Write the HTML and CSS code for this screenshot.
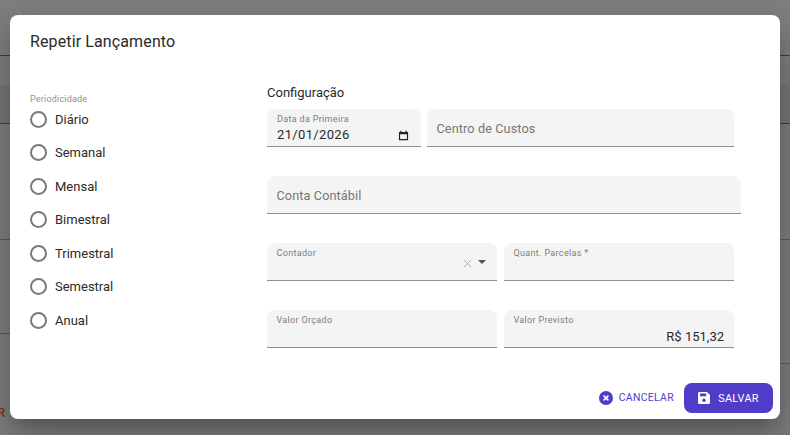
FILE: index.html
```html
<!DOCTYPE html>
<html lang="pt">
<head>
<meta charset="utf-8">
<title>Repetir Lançamento</title>
<link rel="stylesheet" href="styles.css">
</head>
<body>
<div class="backdrop">
  <div class="top-space"></div>
  <div class="page-line"></div>
  <div class="band-space"></div>
  <div class="band"></div>
  <div class="page-line"></div>
  <div class="mid-space"></div>
  <div class="page-line soft"></div>
  <div class="split">
    <div class="split-left"><div class="page-line soft"></div></div>
    <div class="split-right"><div class="page-line soft"></div></div>
  </div>
  <span class="behind-text">R</span>
</div>
<div class="dialog" role="dialog">
  <h2 class="title">Repetir Lançamento</h2>
  <div class="content">
    <div class="period">
      <div class="period-label">Periodicidade</div>
      <label class="radio"><span class="ring"></span>Diário</label>
      <label class="radio"><span class="ring"></span>Semanal</label>
      <label class="radio"><span class="ring"></span>Mensal</label>
      <label class="radio"><span class="ring"></span>Bimestral</label>
      <label class="radio"><span class="ring"></span>Trimestral</label>
      <label class="radio"><span class="ring"></span>Semestral</label>
      <label class="radio"><span class="ring"></span>Anual</label>
    </div>
    <div class="config">
      <div class="config-title">Configuração</div>
      <div class="row">
        <div class="field w-date">
          <span class="mini">Data da Primeira</span>
          <div class="value date-value">21/01/2026
            <svg class="cal" viewBox="0 0 12 12" width="11" height="11"><path d="M1 2.2h1.6V.8h1.4v1.4h4V.8h1.4v1.4H11V11.2H1zM2.3 4.6v5.3h7.4V4.6z" fill="#222"/></svg>
          </div>
        </div>
        <div class="field w-cost"><span class="placeholder">Centro de Custos</span></div>
      </div>
      <div class="row">
        <div class="field w-full"><span class="placeholder">Conta Contábil</span></div>
      </div>
      <div class="row">
        <div class="field w-half">
          <span class="mini">Contador</span>
          <svg class="clear" viewBox="0 0 10 10" width="9" height="9"><path d="M1 1l8 8M9 1l-8 8" stroke="#b0b0b0" stroke-width="1.1" fill="none"/></svg>
          <span class="caret"></span>
        </div>
        <div class="field w-half"><span class="mini">Quant. Parcelas *</span></div>
      </div>
      <div class="row">
        <div class="field w-half"><span class="mini">Valor Orçado</span></div>
        <div class="field w-half">
          <span class="mini">Valor Previsto</span>
          <div class="value money">R$ 151,32</div>
        </div>
      </div>
    </div>
  </div>
  <div class="actions">
    <button class="btn-cancel" type="button">
      <svg viewBox="0 0 14 14" width="14" height="14"><circle cx="7" cy="7" r="7" fill="#4f3cc9"/><path d="M4.6 4.6l4.8 4.8M9.4 4.6l-4.8 4.8" stroke="#fff" stroke-width="1.5" fill="none"/></svg>
      CANCELAR
    </button>
    <button class="btn-save" type="button">
      <svg viewBox="0 0 12 12" width="12" height="12"><path d="M1.3 0H9l3 3v7.7A1.3 1.3 0 0 1 10.7 12H1.3A1.3 1.3 0 0 1 0 10.7V1.3A1.3 1.3 0 0 1 1.3 0zM2 1.6v2.6h6.2V1.6z" fill="#fff"/><circle cx="6" cy="8.2" r="1.7" fill="#4f3cc9"/></svg>
      SALVAR
    </button>
  </div>
</div>
</body>
</html>
```
FILE: styles.css
```css
* { box-sizing: border-box; }
html, body { margin: 0; height: 100%; overflow: hidden; }
body { font-family: Roboto, "Liberation Sans", sans-serif; background: #808080; color: #2a2a2a; }

.backdrop { position: fixed; inset: 0; background: #808080; }
.top-space { height: 55px; }
.page-line { height: 1px; background: #3f3f3f; }
.page-line.soft { background: #5c5c5c; }
.band-space { height: 29px; }
.band { height: 38px; background: #787878; }
.mid-space { height: 115px; }
.split { display: flex; justify-content: space-between; }
.split-left { width: 395px; padding-top: 93px; }
.split-right { width: 395px; padding-top: 123px; }
.behind-text {
  position: absolute; left: -3px; top: 405px;
  font-size: 13px; font-weight: 500; color: #8c2f22;
}

.dialog {
  position: fixed; left: 10px; top: 15px; width: 770px; height: 404px;
  background: #fff; border-radius: 8px;
  box-shadow: 0 11px 15px -7px rgba(0,0,0,.2), 0 24px 38px 3px rgba(0,0,0,.14), 0 9px 46px 8px rgba(0,0,0,.12);
  display: flex; flex-direction: column;
}
.title { margin: 0; padding: 17px 20px 0; font-size: 16px; line-height: 19px; font-weight: 400; color: #2a2a2a; letter-spacing: .12px; height: 70px; }
.content { display: flex; flex: 1; padding-left: 20px; }

.period { width: 237px; padding-top: 8px; }
.period-label { font-size: 9px; line-height: 12px; color: #8f8f8f; letter-spacing: .2px; margin-bottom: 1px; }
.radio { display: flex; align-items: center; height: 33.5px; margin-top: -3.5px; margin-bottom: 3.5px; font-size: 13px; color: #2a2a2a; }
.ring { width: 17px; height: 17px; border: 2px solid #7a7a7a; border-radius: 50%; margin: 0 8px 0 0; }

.config { flex: 1; }
.config-title { font-size: 13px; line-height: 16px; color: #2a2a2a; margin-bottom: 8px; }
.row { display: flex; gap: 7px; margin-bottom: 29px; }
.field {
  position: relative; height: 38px; background: #f4f4f4;
  border-bottom: 1px solid #8e8e8e; border-radius: 8px 8px 0 0; padding: 0 10px;
}
.w-date { width: 154px; margin-right: -1px; }
.w-cost { width: 307px; padding-left: 9.5px; }
.w-full { width: 474px; padding-left: 9.5px; }
.w-half { width: 230px; padding-left: 9.5px; }
.mini { display: block; font-size: 9px; line-height: 12px; color: #7d7d7d; padding-top: 4px; letter-spacing: .33px; }
.placeholder { display: block; font-size: 12.7px; line-height: 40px; color: #767676; letter-spacing: .1px; }
.value { font-size: 13px; line-height: 16px; color: #2a2a2a; }
.date-value { display: flex; justify-content: space-between; align-items: center; letter-spacing: .35px; padding-top: 2px; }
.cal { margin-right: 2px; }
.money { text-align: right; padding-top: 3px; }
.clear { position: absolute; left: 196px; top: 16px; }
.caret { position: absolute; left: 211px; top: 17px; border: 4px solid transparent; border-top-color: #555; border-bottom: 0; }

.actions { display: flex; justify-content: flex-end; align-items: center; gap: 10px; padding: 0 7px 6px 0; }
.btn-cancel, .btn-save {
  display: flex; align-items: center; border: 0; font-family: inherit; letter-spacing: .35px; cursor: pointer;
}
.btn-cancel { background: none; color: #4f3cc9; gap: 6px; padding: 0 0 1px; height: 30px; font-size: 10.4px; }
.btn-cancel svg { margin-top: 1px; }
.btn-save { background: #4f3cc9; color: #fff; gap: 8px; height: 30px; width: 89px; border-radius: 8px; justify-content: center; padding: 0; font-size: 10.8px; }
```
